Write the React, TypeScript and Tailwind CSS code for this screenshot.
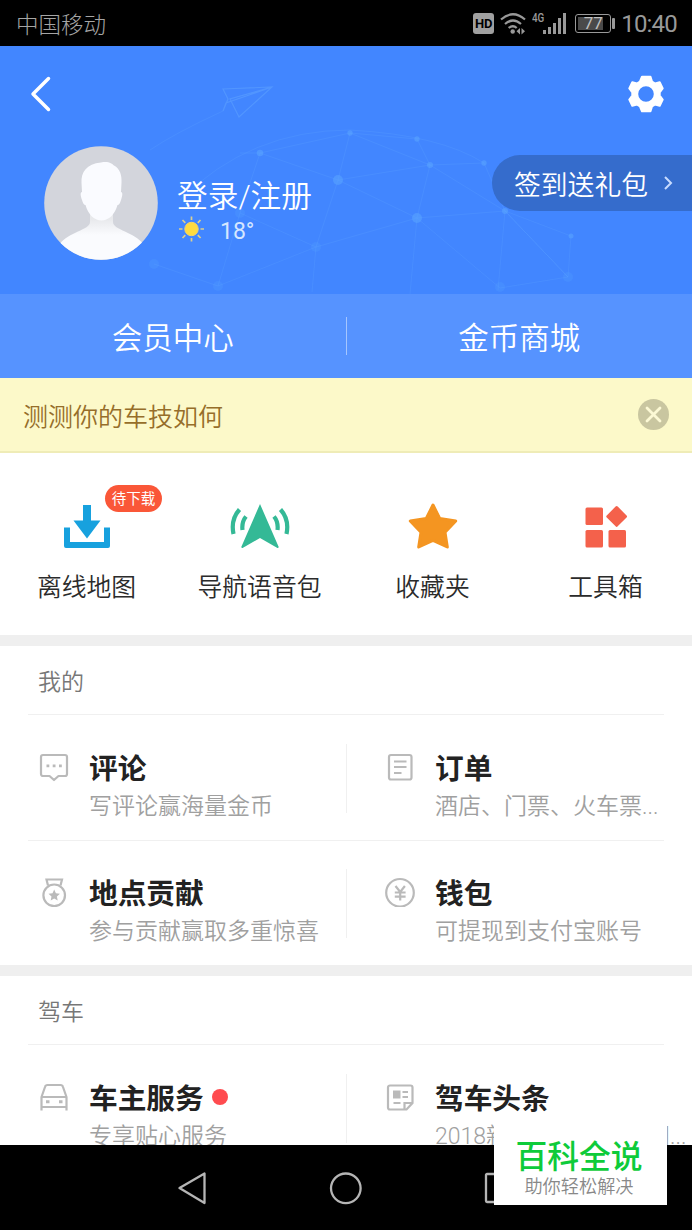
import type { ReactNode } from "react"

type Shortcut = {
  label: string
  badge?: string
  icon: ReactNode
}

type Entry = {
  title: string
  desc: ReactNode
  dot?: boolean
  icon: ReactNode
}

const shortcuts: Shortcut[] = [
  {
    label: "离线地图",
    badge: "待下载",
    icon: (
      <svg width="60" height="50" viewBox="0 0 60 50" fill="#17a1de">
        <path d="M26 6h8v15.500h9.500L30 39.500 16.500 21.500H26z" />
        <path d="M7 28.500h6V43h34V28.500h6V47a2 2 0 0 1-2 2H9a2 2 0 0 1-2-2z" />
      </svg>
    ),
  },
  {
    label: "导航语音包",
    icon: (
      <svg width="60" height="50" viewBox="0 0 60 50" fill="none" stroke="#34b996" strokeWidth="4.200">
        <path d="M30 5 48.500 47.500a1 1 0 0 1-1.500 1.300L30 39 13 48.800a1 1 0 0 1-1.500-1.300z" fill="#34b996" stroke="none" />
        <path d="M16 17.500q-4.500 5.500-3.500 13.500M9.500 10.500Q.5 20.500 3.500 35M44 17.500q4.500 5.500 3.500 13.500M50.500 10.500q9 10 6 24.500" />
      </svg>
    ),
  },
  {
    label: "收藏夹",
    icon: (
      <svg width="60" height="50" viewBox="0 0 60 50" fill="#f49521" stroke="#f49521" strokeWidth="3" strokeLinejoin="round">
        <path d="M30 6 36.700 19.500 52.700 22 42 33.200 44.300 48 30 41.300 15.700 48 18 33.200 7.300 22 23.300 19.500z" />
      </svg>
    ),
  },
  {
    label: "工具箱",
    icon: (
      <svg width="60" height="50" viewBox="0 0 60 50" fill="#f4614b">
        <rect x="9.500" y="8.500" width="17.500" height="17.500" rx="1.500" />
        <rect x="9.500" y="31" width="17.500" height="17.500" rx="1.500" />
        <rect x="32.500" y="31" width="17.500" height="17.500" rx="1.500" />
        <rect x="32.900" y="9.700" width="15.500" height="15.500" rx="1.500" transform="rotate(45 40.650 17.450)" />
      </svg>
    ),
  },
]

const mine: Entry[] = [
  {
    title: "评论",
    desc: "写评论赢海量金币",
    icon: (
      <svg width="30" height="30" viewBox="0 0 30 30" fill="none" stroke="#bababa" strokeWidth="2.200" strokeLinejoin="round">
        <path d="M4 3h22a2 2 0 0 1 2 2v17a2 2 0 0 1-2 2h-6.500L15 28l-4.500-4H4a2 2 0 0 1-2-2V5a2 2 0 0 1 2-2z" />
        <path d="M7.500 13.800h2.800M13.700 13.800h2.800M20 13.800h2.800" strokeWidth="2.800" />
      </svg>
    ),
  },
  {
    title: "订单",
    desc: (
      <>
        酒店、门票、火车票<span className="font-[Roboto]">...</span>
      </>
    ),
    icon: (
      <svg width="30" height="30" viewBox="0 0 30 30" fill="none" stroke="#bababa" strokeWidth="2.200">
        <rect x="4" y="3" width="22.500" height="24.500" rx="2" />
        <path d="M9 9.500h12.500M9 15h12.500M9 21h7.500" />
      </svg>
    ),
  },
  {
    title: "地点贡献",
    desc: "参与贡献赢取多重惊喜",
    icon: (
      <svg width="30" height="30" viewBox="0 0 30 30" fill="none" stroke="#bababa" strokeWidth="2.200">
        <circle cx="15.200" cy="18.300" r="10.800" />
        <path d="M9 8.500 7.500 2.500h15.500L21.500 8.500" />
        <path d="m15.200 12.500 1.700 3.700 4 .5-3 2.700.8 4-3.500-2-3.500 2 .8-4-3-2.700 4-.5z" fill="#bababa" stroke="none" />
      </svg>
    ),
  },
  {
    title: "钱包",
    desc: "可提现到支付宝账号",
    icon: (
      <svg width="30" height="30" viewBox="0 0 30 30" fill="none" stroke="#bababa" strokeWidth="2.200">
        <circle cx="15" cy="15.800" r="13.800" />
        <path d="m10.500 9 4.700 6 4.700-6M15.200 15v8.500M9.800 15.500h10.800M9.800 19.700h10.800" />
      </svg>
    ),
  },
]

const driving: Entry[] = [
  {
    title: "车主服务",
    desc: "专享贴心服务",
    dot: true,
    icon: (
      <svg width="30" height="30" viewBox="0 0 30 30" fill="none" stroke="#bababa" strokeWidth="2.200" strokeLinejoin="round">
        <path d="M2.500 28.500V15L6 5Q6.500 3 8.500 3h13q2 0 2.500 2l3.500 10v13.500M2.500 15h25M2.500 25h25" />
        <path d="M7 19.800h3.500M20 19.800h3.500" strokeWidth="3" />
      </svg>
    ),
  },
  {
    title: "驾车头条",
    desc: (
      <>
        <span className="font-[Roboto]">2018</span>新车资讯第一时间<span className="font-[Roboto]">...</span>
      </>
    ),
    icon: (
      <svg width="30" height="30" viewBox="0 0 30 30" fill="none" stroke="#bababa" strokeWidth="2.200">
        <path d="M5 3.500h20.500a2 2 0 0 1 2 2V21l-6 6.500H5a2 2 0 0 1-2-2v-20a2 2 0 0 1 2-2z" />
        <path d="M19.500 27.500V21H27M17.500 10H23M17.500 15H23M8.500 21h7" />
        <path d="M8 8.500h7.500v8H8z" fill="#bababa" stroke="none" />
      </svg>
    ),
  },
]

function StatusBar() {
  return (
    <div className="flex h-[46px] shrink-0 items-center justify-between bg-black pr-[15px] pl-4 text-[#999]">
      <span className="text-[22.500px] leading-none font-light text-[#a5a5a5]">中国移动</span>
      <div className="flex items-center">
        <span className="mr-[6px] flex h-[21px] w-[21px] items-center justify-center rounded-[3px] bg-[#a0a0a0] font-[Roboto] text-[13px] leading-none font-bold text-black">
          HD
        </span>
        <svg width="26" height="24" viewBox="0 0 26 24" fill="none" stroke="#999" strokeWidth="2.200">
          <path d="M1 8.500Q13-2 25 8.500M5 13q8-7 16 0M8.700 17q4.300-3.500 8 0" />
          <circle cx="12.700" cy="20.500" r="2.200" fill="#999" stroke="none" />
          <path d="m20 17-3.500 3.200 3.500 3.300zM21.500 17l3.500 3.200-3.500 3.300z" fill="#999" stroke="none" />
        </svg>
        <div className="ml-[6px] flex h-[22px] w-[34px] items-start">
          <span className="w-[11px] origin-left scale-x-[0.82] font-[Roboto] text-[12px] leading-none font-medium">4G</span>
          <svg width="23" height="22" viewBox="0 0 23 22" fill="#999">
            <path d="M0 18h3v4H0zM5 15h3v7H5zM10 11h3v11h-3zM15 6h3v16h-3zM20 1h3v21h-3z" />
          </svg>
        </div>
        <div className="ml-[9px] flex h-[19px] w-[36px] items-center rounded-[3px] border border-[#999] p-[2px]">
          <div className="flex h-full w-[25px] items-center justify-center bg-[#4a4a4a]">
            <span className="ml-[5px] font-[Roboto] text-[17px] leading-none text-[#c0c0c0]">77</span>
          </div>
        </div>
        <div className="mr-[6px] ml-[1px] h-[11px] w-[3px] rounded-[1px] bg-[#999]" />
        <span className="mt-[2px] font-[Roboto] text-[24px] leading-none tracking-[-0.8px]">10:40</span>
      </div>
    </div>
  )
}

// faint paper plane and constellation behind the profile area
function Constellation() {
  return (
    <svg className="absolute inset-0" width="692" height="248" viewBox="0 46 692 248" fill="none" stroke="#5ba0ff" strokeOpacity="0.300">
      <path d="M223 89 272 87 239 117 230 99 272 87 226 103 223 111 228 99z" strokeOpacity="0.600" strokeWidth="1.200" />
      <path d="M223 111Q175 133 150 150" />
      <path d="M240 153 260 153 350 133 417 139 430 165 484 163 505 211 571 236 568 277 505 211 430 165 350 133 338 180 260 153 240 213 316 247 338 180 417 218 505 211 498 290M338 180 430 165 417 218 316 247 312 292M417 218 410 294M417 218 500 288 568 277M240 213 218 286 316 247M154 264 218 286M505 211 568 277M180 200Q250 130 350 130 440 135 484 163" />
      <g fill="#5ba8ff" fillOpacity="0.500" stroke="none">
        <circle cx="260" cy="153" r="3.300" />
        <circle cx="350" cy="133" r="2.700" />
        <circle cx="417" cy="139" r="2.700" />
        <circle cx="430" cy="165" r="3" />
        <circle cx="484" cy="163" r="2.700" />
        <circle cx="338" cy="180" r="5" />
        <circle cx="417" cy="218" r="5" />
        <circle cx="505" cy="211" r="3" />
        <circle cx="571" cy="236" r="2.500" />
        <g fillOpacity="0.200">
          <circle cx="568" cy="277" r="5" />
          <circle cx="316" cy="247" r="5" />
          <circle cx="240" cy="213" r="5" />
          <circle cx="154" cy="264" r="5" />
          <circle cx="218" cy="286" r="5" />
          <circle cx="500" cy="287" r="5" />
        </g>
      </g>
    </svg>
  )
}

function Avatar() {
  return (
    <svg width="114" height="114" viewBox="0 0 114 114">
      <defs>
        <clipPath id="avatar">
          <circle cx="57" cy="57" r="56.800" />
        </clipPath>
        <linearGradient id="neck" x1="0" y1="0" x2="0" y2="1">
          <stop offset="0.150" stopColor="#e8e9ec" />
          <stop offset="0.450" stopColor="#fafbfe" />
        </linearGradient>
      </defs>
      <g clipPath="url(#avatar)">
        <rect width="114" height="114" fill="#d3d5dc" />
        <path d="M46 65v11c0 8-22 10-30 22v20h83V98C91 86 69 84 69 76V65z" fill="url(#neck)" />
        <path d="M57 16.500c8-1.500 11 1.500 13 3 6 3 8 10 7.500 17.500l-.5 9c2 0 1.500 4 0 8-.8 3-2 5-3.500 5C71 68 65 74.500 57.500 74.500S44 68 41.500 59c-1.500 0-2.700-2-3.500-5-1.500-4-2-8 0-8l-.5-9c-.5-11 5-19 19.500-20.500z" fill="#fafbff" />
      </g>
    </svg>
  )
}

function Header() {
  return (
    <header className="relative h-[248px] shrink-0 bg-[#4286ff] text-white">
      <Constellation />
      <div className="relative flex h-[96px] items-center justify-between pr-[27px] pl-[30px]">
        <svg width="22" height="36" viewBox="0 0 22 36" fill="none" stroke="#fff" strokeWidth="3.500" strokeLinecap="round" strokeLinejoin="round">
          <path d="M18.500 2.500 3 18l15.500 15.500" />
        </svg>
        <svg width="38" height="38" viewBox="0 0 38 38" fill="#fff" stroke="#fff" strokeWidth="2" strokeLinejoin="round">
          <path
            fillRule="evenodd"
            d="M15 1.700h8.500L25 6.500l3.200 2 4.500-1.200 3 6.200-3 3.800v3.400l3 3.800-3 6.200-4.500-1.200-3.200 2-1.500 4.800H15L13 31.500l-3.200-2-4.500 1.200-3-6.200 3-3.800v-3.400l-3-3.800 3-6.200 4.500 1.200 3.200-2zM19 10.200a8.800 8.800 0 1 0 0 17.600 8.800 8.800 0 0 0 0-17.600z"
          />
        </svg>
      </div>
      <div className="relative flex items-start pt-[4px] pl-[44px]">
        <Avatar />
        <div className="ml-[19px] flex-1 pt-[32px]">
          <div className="text-[30.700px] leading-[32px] font-[350]">
            登录<span className="font-[Roboto]">/</span>注册
          </div>
          <div className="mt-[1px] flex items-center">
            <svg width="28" height="26" viewBox="0 0 28 26" fill="none" stroke="#d9cf91" strokeWidth="1.700">
              <circle cx="14.500" cy="13" r="6.700" fill="#ffdb3f" stroke="#f5d568" strokeWidth="1" />
              <path d="M14.500.5v3.500M14.500 22v3.500M2 13h3.500M23.500 13H27M5.500 4l2.800 2.800M20.800 19.200l2.800 2.800M23.500 4l-2.700 2.800M8.300 19.200 5.500 22" />
            </svg>
            <span className="mt-[6px] ml-[15px] font-[Roboto] text-[23px] leading-none text-[#d5e6ff]">18°</span>
          </div>
        </div>
        <div className="mt-[9px] flex h-[56px] w-[200px] items-center rounded-l-full bg-[#356ccc] pl-[22px]">
          <span className="pt-[2px] text-[26.800px] leading-none font-[350]">签到送礼包</span>
          <svg className="ml-[15px]" width="10" height="14" viewBox="0 0 10 14" fill="none" stroke="#c8dcff" strokeWidth="2">
            <path d="m2 1 6 6-6 6" />
          </svg>
        </div>
      </div>
    </header>
  )
}

function EntryCell({ entry }: { entry: Entry }) {
  return (
    <div className="flex w-[346px] shrink-0 pt-[37px] pl-[39px]">
      {entry.icon}
      <div className="ml-[20px]">
        <div className="flex items-center">
          <span className="text-[28.700px] leading-[29px] font-bold whitespace-nowrap text-[#222]">{entry.title}</span>
          {entry.dot && <span className="ml-[8px] h-4 w-4 rounded-full bg-[#ff4b4f]" />}
        </div>
        <div className="mt-[12px] text-[23px] leading-[23px] font-[350] whitespace-nowrap text-[#a0a0a0]">{entry.desc}</div>
      </div>
    </div>
  )
}

function Section({ title, entries }: { title: string; entries: Entry[] }) {
  const rows = []
  for (let i = 0; i < entries.length; i += 2) rows.push(entries.slice(i, i + 2))

  return (
    <section className="shrink-0 border-t-[11px] border-[#efefef] bg-white">
      <h2 className="flex h-[68px] items-center pl-[38px] text-[23px] leading-none font-[350] text-[#777]">{title}</h2>
      {rows.map((row, index) => (
        <div key={index} className={index ? "h-[125px]" : "h-[126px]"}>
          <div className="mx-7 h-px bg-[#f0f0f0]" />
          <div className={index ? "-mt-px flex" : "flex"}>
            <EntryCell entry={row[0]} />
            <div className="-mr-px mt-[29px] h-[69px] w-px shrink-0 bg-[#f0f0f0]" />
            <EntryCell entry={row[1]} />
          </div>
        </div>
      ))}
    </section>
  )
}

function NavBar() {
  return (
    <nav className="flex h-[85px] shrink-0 items-center bg-black pl-[177px]">
      <svg width="340" height="34" viewBox="0 0 340 34" fill="none" stroke="#b5b5b5" strokeWidth="2.300" strokeLinejoin="round">
        <path d="M27.500 2.500v29.500L2.500 17z" />
        <circle cx="168.800" cy="17.300" r="14.800" />
        <rect x="309" y="3" width="29" height="28" rx="1" />
      </svg>
    </nav>
  )
}

export default function App() {
  return (
    <div className="relative flex h-[1230px] w-[692px] flex-col overflow-hidden bg-white font-['Noto_Sans_CJK_SC',sans-serif]">
      <StatusBar />
      <Header />

      <div className="flex h-[84px] shrink-0 items-center bg-[#5693ff] text-center text-[30.500px] leading-none font-[350] text-white">
        <span className="flex-1">会员中心</span>
        <span className="h-[38px] w-px bg-[#a5c6ff]" />
        <span className="flex-1">金币商城</span>
      </div>

      <div className="flex h-[75px] shrink-0 items-center justify-between border-b-2 border-[#efecb7] bg-[#fcf9c9] pr-[23px] pl-[23px]">
        <span className="pt-[2px] text-[25px] leading-none font-[350] text-[#966e2a]">测测你的车技如何</span>
        <svg width="31" height="31" viewBox="0 0 31 31" fill="none" stroke="#fcf9d5" strokeWidth="2.800" strokeLinecap="round">
          <circle cx="15.500" cy="15.500" r="15.500" fill="#c9c6a0" stroke="none" />
          <path d="m9 9 13 13M22 9 9 22" />
        </svg>
      </div>

      <div className="grid h-[182px] shrink-0 grid-cols-4 pt-[46px]">
        {shortcuts.map((item) => (
          <div key={item.label} className="relative flex flex-col items-center">
            {item.icon}
            <span className="mt-[24px] text-[24.800px] leading-[25px] font-[350] text-[#2b2b2b]">{item.label}</span>
            {item.badge && (
              <span className="absolute -top-[14px] left-[105px] flex h-[27px] w-[57px] items-center justify-center rounded-full bg-[#fa5738] text-[14.500px] leading-none text-white">
                {item.badge}
              </span>
            )}
          </div>
        ))}
      </div>

      <Section title="我的" entries={mine} />
      {/* last section runs under the navigation bar */}
      <div className="min-h-0 flex-1 overflow-hidden">
        <Section title="驾车" entries={driving} />
      </div>

      <NavBar />

      <div className="absolute top-[1122px] left-[494px] flex h-[83px] w-[173px] flex-col items-center bg-white pt-[16px] pr-[3px]">
        <span className="text-[31.800px] leading-[32px] font-medium text-[#0ecb3a]">百科全说</span>
        <span className="mt-[6px] text-[18.200px] leading-[18px] font-[350] text-[#888]">助你轻松解决</span>
      </div>
    </div>
  )
}
